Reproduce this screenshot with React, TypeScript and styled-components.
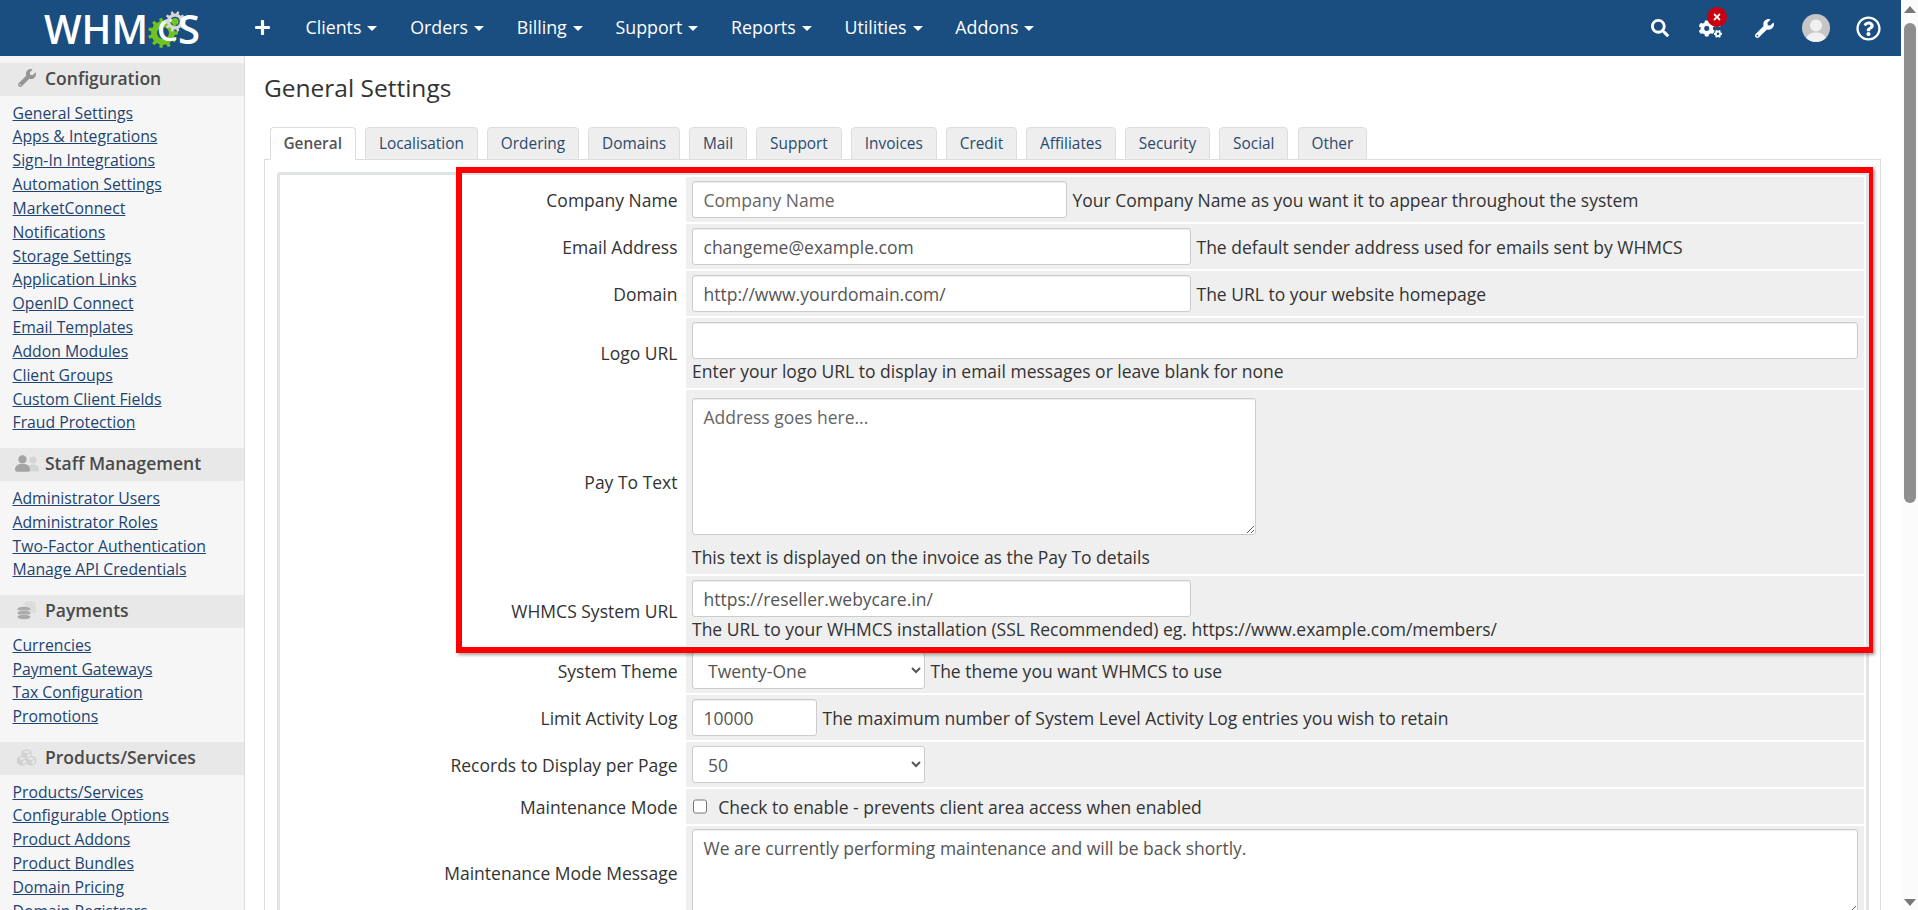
import React from "react";
import styled, { createGlobalStyle } from "styled-components";
import { FaSearch, FaCogs, FaWrench, FaRegQuestionCircle, FaPlus, FaCubes, FaTimes } from "react-icons/fa";

const Global = createGlobalStyle`
  html, body { margin: 0; padding: 0; height: 100%; overflow: hidden; background: #fff; }
  body { font-family: "Open Sans", "Liberation Sans", sans-serif; font-size: 17.5px; color: #333; }
  * { box-sizing: border-box; }
`;

const Shell = styled.div`
  display: flex;
  width: 100vw;
  height: 100vh;
  overflow: hidden;
`;
const Page = styled.div`
  flex: 1;
  min-width: 0;
  display: flex;
  flex-direction: column;
`;
const TopBar = styled.header`
  flex: 0 0 56px;
  height: 56px;
  background: #1a4d80;
  display: flex;
  align-items: center;
  padding-right: 7px;
  color: #fff;
`;
const LogoBox = styled.div`
  flex: 0 0 254px;
  height: 56px;
`;
const Plus = styled.span`
  width: 17px;
  display: flex;
  margin-right: 18px;
  padding-bottom: 2px;
  font-size: 17px;
`;
const NavItem = styled.a`
  display: flex;
  align-items: center;
  padding: 0 16.3px 3px 16.5px;
  font-size: 17.8px;
  color: #fff;
  height: 56px;
  white-space: nowrap;
`;
const Caret = styled.i`
  display: inline-block;
  margin-left: 6px;
  margin-top: 3px;
  border-top: 5.5px solid #fff;
  border-left: 5px solid transparent;
  border-right: 5px solid transparent;
`;
const NavRight = styled.div`
  margin-left: auto;
  display: flex;
  align-items: center;
`;
const IconBtn = styled.div`
  position: relative;
  width: 52px;
  height: 56px;
  display: flex;
  align-items: center;
  justify-content: center;
  color: #fff;
`;
const Badge = styled.span`
  position: absolute;
  left: 21px;
  top: 7px;
  width: 20px;
  height: 20px;
  border-radius: 50%;
  background: #c6000e;
  display: flex;
  align-items: center;
  justify-content: center;
  font-size: 10px;
  color: #fff;
`;
const Avatar = styled.span`
  width: 28px;
  height: 28px;
  border-radius: 50%;
  background: #c6c6c6;
  overflow: hidden;
  display: block;
`;

const Body = styled.div`
  flex: 1;
  min-height: 0;
  display: flex;
  overflow: hidden;
`;
const Sidebar = styled.aside`
  flex: 0 0 245px;
  background: #f6f6f6;
  border-right: 1px solid #ddd;
  padding-top: 7px;
`;
const SectionHead = styled.div`
  height: 33px;
  padding-bottom: 3px;
  background: #e8e8e8;
  display: flex;
  align-items: center;
  font-size: 17.5px;
  font-weight: 600;
  color: #4a4a4a;
`;
const SectionIcon = styled.span`
  flex: 0 0 45px;
  display: flex;
  align-items: center;
  justify-content: center;
  padding-left: 8px;
  color: #9a9a9a;
`;
const LinkList = styled.ul`
  list-style: none;
  margin: 0;
  padding: 5.5px 0 13px 12.5px;
`;
const SideLink = styled.li`
  height: 23.85px;
  line-height: 23.85px;
  font-size: 15.75px;
  color: #1d4472;
  text-decoration: underline;
  white-space: nowrap;
`;

const Content = styled.main`
  flex: 1;
  min-width: 0;
  padding: 16px 20px 0 19px;
`;
const Title = styled.h1`
  margin: 0 0 23px;
  font-size: 24.5px;
  line-height: 32px;
  height: 32px;
  font-weight: 400;
  color: #333;
`;
const Tabs = styled.div`
  display: flex;
  gap: 9.2px;
  padding-left: 5.5px;
  height: 33px;
  border-bottom: 1px solid #ddd;
  position: relative;
`;
const Tab = styled.div<{ $active?: boolean }>`
  height: 33px;
  padding: 0 12.9px;
  line-height: 31px;
  font-size: 15.4px;
  font-weight: ${(p) => (p.$active ? 600 : 400)};
  border: 1px solid #ddd;
  border-radius: 4px 4px 0 0;
  border-bottom-color: ${(p) => (p.$active ? "#fff" : "#ddd")};
  background: ${(p) => (p.$active ? "#fff" : "#eee")};
  color: ${(p) => (p.$active ? "#555" : "#2b4a6e")};
  white-space: nowrap;
`;
const Panel = styled.div`
  position: relative;
  border: 1px solid #ddd;
  border-top: 0;
  padding: 12px 11px 0 12px;
  height: 800px;
`;
const Highlight = styled.div`
  position: absolute;
  left: 191px;
  top: 7px;
  width: 1417px;
  height: 486px;
  border: solid #f00;
  border-width: 6px 4.5px 6px 6px;
  box-shadow: 2px 2px 3px rgba(0, 0, 0, 0.35);
  pointer-events: none;
`;
const FormTable = styled.div`
  border: 3px solid #e1e4e6;
  border-radius: 3px;
  padding: 2px;
  display: flex;
  flex-direction: column;
  gap: 2px;
`;
const Row = styled.div`
  display: grid;
  grid-template-columns: 402px 1fr;
  gap: 2px;
`;
const Label = styled.div`
  display: flex;
  align-items: center;
  justify-content: flex-end;
  padding-right: 6.5px;
  font-size: 17.5px;
  color: #333;
`;
const Field = styled.div<{ $top?: number }>`
  background: #efefef;
  padding: ${(p) => p.$top ?? 4}px 6px 4px;
  min-width: 0;
`;
const Inline = styled.div`
  display: flex;
  align-items: center;
  gap: 5.5px;
  font-size: 17.5px;
  white-space: nowrap;
`;
const Help = styled.div<{ $gap?: number }>`
  margin-top: ${(p) => p.$gap ?? 0}px;
  line-height: 25px;
  font-size: 17.5px;
  white-space: nowrap;
`;
const TextInput = styled.input<{ $w?: number }>`
  display: block;
  width: ${(p) => (p.$w ? `${p.$w}px` : "100%")};
  height: 37px;
  padding: 0 10.5px;
  border: 1px solid #ccc;
  border-radius: 3px;
  background: #fff;
  box-shadow: inset 0 1px 1px rgba(0, 0, 0, 0.075);
  font: inherit;
  font-size: 17.5px;
  color: #555;
  outline: none;
  &::placeholder { color: #666; opacity: 1; }
`;
const TextBox = styled.textarea<{ $w?: number; $h: number; $top?: number }>`
  display: block;
  width: ${(p) => (p.$w ? `${p.$w}px` : "100%")};
  height: ${(p) => p.$h}px;
  margin-top: ${(p) => p.$top ?? 0}px;
  padding: 7px 10.5px;
  border: 1px solid #ccc;
  border-radius: 3px;
  background: #fff;
  box-shadow: inset 0 1px 1px rgba(0, 0, 0, 0.075);
  font: inherit;
  font-size: 17.5px;
  line-height: 22px;
  color: #555;
  outline: none;
  &::placeholder { color: #666; opacity: 1; }
`;
const Select = styled.select`
  display: block;
  width: 233px;
  height: 37px;
  padding: 0 6px 0 11px;
  border: 1px solid #ccc;
  border-radius: 3px;
  background-color: #fff;
  font: inherit;
  font-size: 17.5px;
  color: #555;
  outline: none;
`;
const CheckLine = styled.label`
  display: flex;
  align-items: center;
  height: 27px;
  font-size: 17.5px;
  white-space: nowrap;
`;
const Check = styled.input`
  width: 14.3px;
  height: 14.3px;
  margin: 0 11px 0 1px;
`;

const Rail = styled.div`
  flex: 0 0 17px;
  background: #fbfbfb;
  display: flex;
  flex-direction: column;
  align-items: center;
  padding: 6px 0 4px;
`;
const ArrowUp = styled.i`
  border-bottom: 7px solid #777;
  border-left: 6px solid transparent;
  border-right: 6px solid transparent;
`;
const ArrowDown = styled.i`
  margin-top: auto;
  border-top: 7px solid #777;
  border-left: 6px solid transparent;
  border-right: 6px solid transparent;
`;
const Thumb = styled.div`
  width: 12px;
  height: 480px;
  margin-top: 10px;
  border-radius: 6px;
  background: #8e8e8e;
`;

function gearPath(cx: number, cy: number, rOut: number, rIn: number, teeth: number, hole: number) {
  const pts: string[] = [];
  const step = (Math.PI * 2) / teeth;
  for (let i = 0; i < teeth; i++) {
    const a = i * step;
    const seq: [number, number][] = [
      [rIn, a - step * 0.5],
      [rIn, a - step * 0.27],
      [rOut, a - step * 0.17],
      [rOut, a + step * 0.17],
      [rIn, a + step * 0.27],
    ];
    seq.forEach(([r, t]) => pts.push(`${(cx + r * Math.cos(t)).toFixed(2)} ${(cy + r * Math.sin(t)).toFixed(2)}`));
  }
  const ring = `M${cx - hole} ${cy}a${hole} ${hole} 0 1 0 ${hole * 2} 0a${hole} ${hole} 0 1 0 ${-hole * 2} 0Z`;
  return `M${pts.join("L")}Z${ring}`;
}

const LogoText = styled.text`
  font-family: "Open Sans", "Liberation Sans", sans-serif;
  font-size: 40px;
  font-weight: 600;
  fill: #fff;
`;

const Logo = () => (
  <svg width="254" height="56" viewBox="0 0 254 56" aria-label="WHMCS">
    <LogoText x="44" y="44" textLength="104" lengthAdjust="spacingAndGlyphs">WHM</LogoText>
    <path d={gearPath(163, 33, 15, 11.8, 11, 6)} fill="#6fc41f" fillRule="evenodd" />
    <LogoText x="157" y="41" textLength="21" lengthAdjust="spacingAndGlyphs" style={{ fontSize: 30 }}>C</LogoText>
    <path d={gearPath(175, 21.5, 10.5, 8, 10, 4.8)} fill="#d6d6d6" fillRule="evenodd" />
    <circle cx="175" cy="21.5" r="3.6" fill="#6fc41f" />
    <LogoText x="178" y="44" textLength="22" lengthAdjust="spacingAndGlyphs">S</LogoText>
  </svg>
);

const StaffIcon = () => (
  <svg width="24" height="17" viewBox="0 0 24 17">
    <circle cx="18" cy="5" r="3.6" fill="#d4d4d4" />
    <path d="M12 16c0-4 1.5-6.5 6-6.5s6 2.5 6 5.5c0 1-.6 1.5-1.5 1.5H12Z" fill="#d4d4d4" />
    <circle cx="7.5" cy="4.4" r="4.2" fill="#a3a3a3" />
    <path d="M0 14.5C0 11 2.5 9 7.5 9s7.5 2 7.5 5.5c0 1.4-.8 2.2-2 2.2H2c-1.2 0-2-.8-2-2.2Z" fill="#a3a3a3" />
  </svg>
);
const CoinsIcon = () => (
  <svg width="20" height="19" viewBox="0 0 20 19">
    <g fill="#dcdcdc">
      <ellipse cx="13" cy="2.6" rx="6.5" ry="2.4" />
      <ellipse cx="13" cy="6.4" rx="6.5" ry="2.4" />
      <ellipse cx="14" cy="10" rx="5.5" ry="2.4" />
    </g>
    <g fill="#ababab" stroke="#e8e8e8" strokeWidth=".5">
      <ellipse cx="7" cy="8" rx="6.8" ry="2.6" />
      <ellipse cx="7" cy="12" rx="6.8" ry="2.6" />
      <ellipse cx="7" cy="16" rx="6.8" ry="2.6" />
    </g>
  </svg>
);
const AvatarFace = () => (
  <svg width="28" height="28" viewBox="0 0 28 28">
    <circle cx="14" cy="11.5" r="6" fill="#f1f1f1" />
    <path d="M3 28c1-7 5-9.5 11-9.5S24 21 25 28Z" fill="#f1f1f1" />
  </svg>
);

const sections: { title: string; icon: React.ReactNode; links: string[] }[] = [
  {
    title: "Configuration",
    icon: <FaWrench size={18} color="#959595" />,
    links: ["General Settings", "Apps & Integrations", "Sign-In Integrations", "Automation Settings", "MarketConnect", "Notifications", "Storage Settings", "Application Links", "OpenID Connect", "Email Templates", "Addon Modules", "Client Groups", "Custom Client Fields", "Fraud Protection"],
  },
  {
    title: "Staff Management",
    icon: <StaffIcon />,
    links: ["Administrator Users", "Administrator Roles", "Two-Factor Authentication", "Manage API Credentials"],
  },
  {
    title: "Payments",
    icon: <CoinsIcon />,
    links: ["Currencies", "Payment Gateways", "Tax Configuration", "Promotions"],
  },
  {
    title: "Products/Services",
    icon: <FaCubes size={19} color="#d0d0d0" />,
    links: ["Products/Services", "Configurable Options", "Product Addons", "Product Bundles", "Domain Pricing", "Domain Registrars"],
  },
];

const navItems = ["Clients", "Orders", "Billing", "Support", "Reports", "Utilities", "Addons"];
const tabs = ["General", "Localisation", "Ordering", "Domains", "Mail", "Support", "Invoices", "Credit", "Affiliates", "Security", "Social", "Other"];

export default function App() {
  return (
    <Shell>
      <Global />
      <Page>
        <TopBar>
          <LogoBox><Logo /></LogoBox>
          <Plus><FaPlus /></Plus>
          {navItems.map((n) => (
            <NavItem key={n}>{n}<Caret /></NavItem>
          ))}
          <NavRight>
            <IconBtn><FaSearch size={18} /></IconBtn>
            <IconBtn>
              <FaCogs size={23} style={{ marginRight: 4 }} />
              <Badge><FaTimes /></Badge>
            </IconBtn>
            <IconBtn><FaWrench size={19} /></IconBtn>
            <IconBtn><Avatar><AvatarFace /></Avatar></IconBtn>
            <IconBtn><FaRegQuestionCircle size={25} /></IconBtn>
          </NavRight>
        </TopBar>
        <Body>
          <Sidebar>
            {sections.map((s) => (
              <section key={s.title}>
                <SectionHead>
                  <SectionIcon>{s.icon}</SectionIcon>
                  {s.title}
                </SectionHead>
                <LinkList>
                  {s.links.map((l) => <SideLink key={l}>{l}</SideLink>)}
                </LinkList>
              </section>
            ))}
          </Sidebar>
          <Content>
            <Title>General Settings</Title>
            <Tabs>
              {tabs.map((t, i) => <Tab key={t} $active={i === 0}>{t}</Tab>)}
            </Tabs>
            <Panel>
              <FormTable>
                <Row>
                  <Label>Company Name</Label>
                  <Field><Inline><TextInput $w={375} placeholder="Company Name" readOnly />Your Company Name as you want it to appear throughout the system</Inline></Field>
                </Row>
                <Row>
                  <Label>Email Address</Label>
                  <Field><Inline><TextInput $w={499} defaultValue="changeme@example.com" readOnly />The default sender address used for emails sent by WHMCS</Inline></Field>
                </Row>
                <Row>
                  <Label>Domain</Label>
                  <Field><Inline><TextInput $w={499} defaultValue="http://www.yourdomain.com/" readOnly />The URL to your website homepage</Inline></Field>
                </Row>
                <Row>
                  <Label>Logo URL</Label>
                  <Field>
                    <TextInput readOnly />
                    <Help>Enter your logo URL to display in email messages or leave blank for none</Help>
                  </Field>
                </Row>
                <Row>
                  <Label>Pay To Text</Label>
                  <Field>
                    <TextBox $w={564} $h={137} $top={4} placeholder="Address goes here..." readOnly />
                    <Help $gap={10}>This text is displayed on the invoice as the Pay To details</Help>
                  </Field>
                </Row>
                <Row>
                  <Label>WHMCS System URL</Label>
                  <Field>
                    <TextInput $w={499} defaultValue="https://reseller.webycare.in/" readOnly />
                    <Help>The URL to your WHMCS installation (SSL Recommended) eg. https://www.example.com/members/</Help>
                  </Field>
                </Row>
                <Row>
                  <Label>System Theme</Label>
                  <Field><Inline><Select defaultValue="Twenty-One"><option>Twenty-One</option></Select>The theme you want WHMCS to use</Inline></Field>
                </Row>
                <Row>
                  <Label>Limit Activity Log</Label>
                  <Field><Inline><TextInput $w={125} defaultValue="10000" readOnly />The maximum number of System Level Activity Log entries you wish to retain</Inline></Field>
                </Row>
                <Row>
                  <Label>Records to Display per Page</Label>
                  <Field><Inline><Select defaultValue="50"><option>50</option></Select></Inline></Field>
                </Row>
                <Row>
                  <Label>Maintenance Mode</Label>
                  <Field><CheckLine><Check type="checkbox" />Check to enable - prevents client area access when enabled</CheckLine></Field>
                </Row>
                <Row>
                  <Label>Maintenance Mode Message</Label>
                  <Field $top={3}>
                    <TextBox $h={86} defaultValue="We are currently performing maintenance and will be back shortly." readOnly />
                  </Field>
                </Row>
              </FormTable>
              <Highlight />
            </Panel>
          </Content>
        </Body>
      </Page>
      <Rail>
        <ArrowUp />
        <Thumb />
        <ArrowDown />
      </Rail>
    </Shell>
  );
}
